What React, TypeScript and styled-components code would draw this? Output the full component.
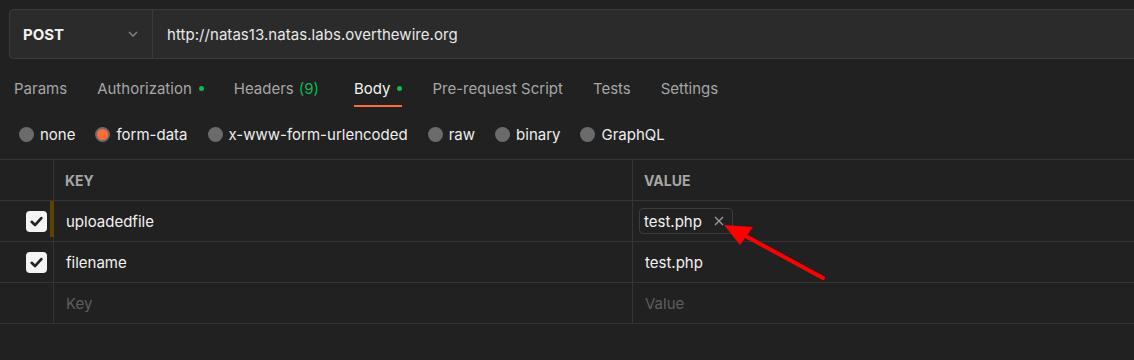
import React from 'react';
import styled, { createGlobalStyle } from 'styled-components';

const GlobalStyle = createGlobalStyle`
    html, body {
        margin: 0;
        padding: 0;
        background: #212121;
        overflow: hidden;
    }
    body {
        font-family: Inter, "Noto Sans", "Liberation Sans", sans-serif;
        font-size: 15px;
        color: #e8e8e8;
    }
`;

const Page = styled.div`
    position: relative;
    width: 1134px;
    height: 360px;
    overflow: hidden;
    background: #212121;
`;

const UrlBar = styled.div`
    display: flex;
    height: 48px;
    margin: 9px -10px 0 9px;
    background: #2b2b2b;
    border: 1px solid #3a3a3a;
    border-radius: 4px;
`;

const MethodBox = styled.div`
    display: flex;
    align-items: center;
    justify-content: space-between;
    width: 143px;
    box-sizing: border-box;
    padding: 0 13px 0 13px;
    border-right: 1px solid #3a3a3a;
    font-weight: 700;
    color: #f2f2f2;
`;

const UrlText = styled.div`
    display: flex;
    align-items: center;
    padding-left: 14px;
    letter-spacing: 0.05px;
    color: #e8e8e8;
`;

const Tabs = styled.div`
    display: flex;
    gap: 30px;
    height: 38px;
    margin-top: 10px;
    padding-left: 14px;
`;

const Tab = styled.div<{ active?: boolean }>`
    display: flex;
    align-items: center;
    height: 100%;
    box-sizing: border-box;
    color: ${p => (p.active ? '#f2f2f2' : '#a6a6a6')};
    border-bottom: 2px solid ${p => (p.active ? '#ff6c37' : 'transparent')};
    padding-top: 2px;
`;

const Dot = styled.span`
    width: 5px;
    height: 5px;
    border-radius: 50%;
    background: #0cbb52;
    margin-left: 7px;
`;

const Count = styled.span`
    color: #0cbb52;
    margin: 0 5px 0 5px;
`;

const Radios = styled.div`
    display: flex;
    align-items: center;
    gap: 20px;
    height: 52px;
    padding: 2px 0 0 19px;
    box-sizing: border-box;
`;

const RadioItem = styled.label`
    display: flex;
    align-items: center;
    gap: 6px;
    color: #eeeeee;
`;

const RadioCircle = styled.span<{ checked?: boolean }>`
    width: 15px;
    height: 15px;
    box-sizing: border-box;
    border-radius: 50%;
    background: ${p => (p.checked ? '#ff6c37' : '#6b6b6b')};
    border: ${p => (p.checked ? '2px solid #6b6b6b' : 'none')};
`;

const Table = styled.div`
    border-top: 1px solid #353535;
    display: grid;
    grid-template-columns: 54px 579px 520px;
`;

const Cell = styled.div<{ first?: boolean; last?: boolean }>`
    position: relative;
    display: flex;
    align-items: center;
    height: 40px;
    box-sizing: content-box;
    border-bottom: 1px solid #353535;
    border-right: ${p => (p.last ? 'none' : '1px solid #353535')};
    padding-left: ${p => (p.first ? '0' : '12px')};
    padding-right: ${p => (p.first ? '6px' : '0')};
    justify-content: ${p => (p.first ? 'flex-end' : 'flex-start')};
`;

const HeadText = styled.span`
    margin-left: -1px;
    font-size: 14px;
    font-weight: 700;
    color: #a6a6a6;
`;

const CellText = styled.span<{ placeholder?: boolean }>`
    color: ${p => (p.placeholder ? '#5e5e5e' : '#f2f2f2')};
`;

const Checkbox = styled.span`
    display: flex;
    align-items: center;
    justify-content: center;
    width: 21px;
    height: 21px;
    border-radius: 4px;
    background: #f4f4f4;
`;

const EditMark = styled.span`
    position: absolute;
    right: -1px;
    top: 0;
    width: 4px;
    height: 36px;
    background: #5e4200;
`;

const FilePill = styled.span`
    display: flex;
    align-items: center;
    gap: 12px;
    height: 24px;
    margin-left: -6px;
    padding: 0 8px 0 4px;
    border: 1px solid #3d3d3d;
    border-radius: 4px;
    color: #f2f2f2;
`;

const Arrow = styled.svg`
    position: absolute;
    left: 0;
    top: 0;
    pointer-events: none;
`;

const Check = () => (
    <svg width="15" height="15" viewBox="0 0 14 14">
        <path d="M2.5 7.3 L5.6 10.3 L11.5 3.8" fill="none" stroke="#222" strokeWidth="2.5" strokeLinecap="round" strokeLinejoin="round" />
    </svg>
);

const tabs = ['Params', 'Authorization', 'Headers', 'Body', 'Pre-request Script', 'Tests', 'Settings'];
const radios = ['none', 'form-data', 'x-www-form-urlencoded', 'raw', 'binary', 'GraphQL'];

const App: React.FC = () => {
    return (
        <Page>
            <GlobalStyle />
            <UrlBar>
                <MethodBox>
                    <span>POST</span>
                    <svg width="12" height="12" viewBox="0 0 12 12">
                        <path d="M2 4 L6 8 L10 4" fill="none" stroke="#8a8a8a" strokeWidth="1.3" />
                    </svg>
                </MethodBox>
                <UrlText>http://natas13.natas.labs.overthewire.org</UrlText>
            </UrlBar>
            <Tabs>
                {tabs.map(t => (
                    <Tab key={t} active={t === 'Body'}>
                        {t}
                        {(t === 'Authorization' || t === 'Body') && <Dot />}
                        {t === 'Headers' && <Count>(9)</Count>}
                    </Tab>
                ))}
            </Tabs>
            <Radios>
                {radios.map(r => (
                    <RadioItem key={r}>
                        <RadioCircle checked={r === 'form-data'} />
                        {r}
                    </RadioItem>
                ))}
            </Radios>
            <Table>
                <Cell first />
                <Cell><HeadText>KEY</HeadText></Cell>
                <Cell last><HeadText>VALUE</HeadText></Cell>

                <Cell first><Checkbox><Check /></Checkbox><EditMark /></Cell>
                <Cell><CellText>uploadedfile</CellText></Cell>
                <Cell last>
                    <FilePill>
                        test.php
                        <svg width="10" height="10" viewBox="0 0 10 10">
                            <path d="M1 1 L9 9 M9 1 L1 9" stroke="#9a9a9a" strokeWidth="1.4" />
                        </svg>
                    </FilePill>
                </Cell>

                <Cell first><Checkbox><Check /></Checkbox></Cell>
                <Cell><CellText>filename</CellText></Cell>
                <Cell last><CellText>test.php</CellText></Cell>

                <Cell first />
                <Cell><CellText placeholder>Key</CellText></Cell>
                <Cell last><CellText placeholder>Value</CellText></Cell>
            </Table>
            <Arrow width="1134" height="360" viewBox="0 0 1134 360">
                <line x1="823" y1="278" x2="740" y2="233" stroke="#ff0000" strokeWidth="4" strokeLinecap="round" />
                <polygon points="724,225 753,227 740,245" fill="#ff0000" />
            </Arrow>
        </Page>
    );
};

export default App;
